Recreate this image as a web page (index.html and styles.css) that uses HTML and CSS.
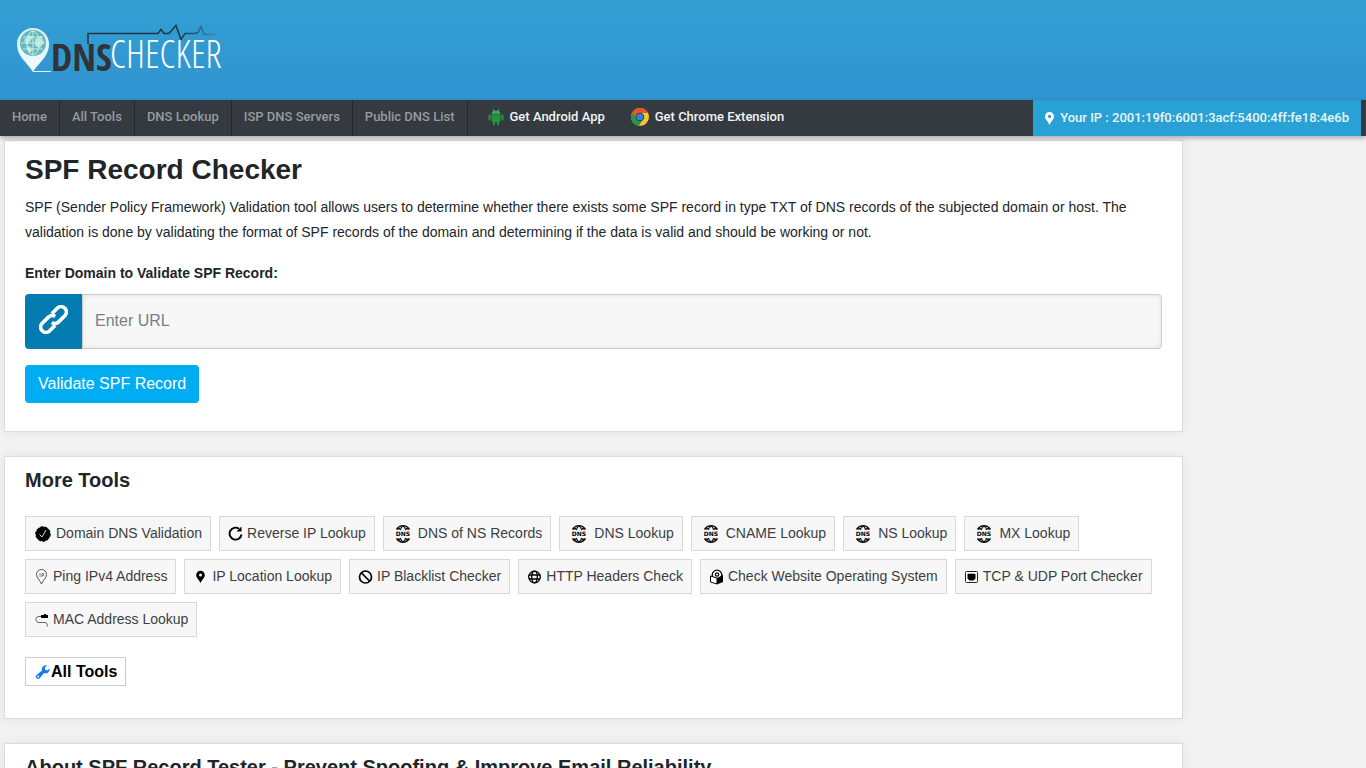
FILE: index.html
```html
<!DOCTYPE html>
<html lang="en">
<head>
<meta charset="utf-8">
<meta name="viewport" content="width=device-width, initial-scale=1">
<title>SPF Record Checker</title>
<link rel="stylesheet" href="styles.css">
</head>
<body>
<svg class="defs" aria-hidden="true">
  <symbol id="globe" viewBox="0 0 22 22">
    <g fill="none" stroke="#111" stroke-width="1.400">
      <path d="M4.500 6.500Q7 2.700 11 2.700T17.500 6.500M4.500 15.500Q7 19.300 11 19.300T17.500 15.500"/>
      <path d="M8.300 7Q9 4 11 3Q13 4 13.700 7M8.300 15Q9 18 11 19Q13 18 13.700 15" stroke-width="1.200"/>
      <path d="M5 5.800h3M14 5.800h3M5 16.200h3M14 16.200h3"/>
    </g>
  </symbol>
</svg>
<header class="header">
  <a class="logo" href="#" aria-label="DNS Checker">
    <svg width="210" height="56" viewBox="0 0 210 56">
      <defs>
        <linearGradient id="pin" x2="0" y2="1"><stop offset="0" stop-color="#d5eff5"/><stop offset="1" stop-color="#f4fcff"/></linearGradient>
        <linearGradient id="line"><stop offset="0" stop-color="#fff" stop-opacity=".4"/><stop offset="1" stop-color="#fff"/></linearGradient>
        <linearGradient id="pulse"><stop offset=".7" stop-color="#20363f"/><stop offset="1" stop-color="#20363f" stop-opacity=".1"/></linearGradient>
      </defs>
      <path d="M17 52C12 43 1 37 1 24a16 16 0 0 1 32 0c0 13-11 19-16 28Z" fill="url(#pin)"/>
      <circle cx="17" cy="23" r="13" fill="#63b9b8"/>
      <g fill="none" stroke="#e2f6f3" stroke-width=".8"><ellipse cx="17" cy="23" rx="6" ry="12"/><path d="M5 23h24M7 17h20M7 29h20M17 11v24"/></g>
      <path d="M8 20l5-5 4 2-3 5-4 2zM19 19l6-3 3 6-4 6-5-2zM10 26l5 1 1 4-3 2z" fill="#d5f1ed" opacity=".75"/>
      <path d="M17 51.500h18" stroke="#d9f3ff" stroke-width="1"/>
      <path d="M90 51.500h115" stroke="url(#line)" stroke-width="2"/>
      <path d="M72 24V13.500h70l3-4 3 4h5l7-8 5 14 4-6h9l4-1 3-6 3 8h14" fill="none" stroke="url(#pulse)" stroke-width="1.500"/>
      <text x="35" y="51" class="logo-bold">DNS</text>
      <text x="94" y="48" class="logo-light">CHECKER</text>
    </svg>
  </a>
</header>
<nav class="nav">
  <div class="links">
    <a class="item" href="#">Home</a><a class="item" href="#">All Tools</a><a class="item" href="#">DNS Lookup</a><a class="item" href="#">ISP DNS Servers</a><a class="item" href="#">Public DNS List</a>
  </div>
  <div class="apps">
    <a class="app" href="#"><svg width="16" height="18" viewBox="0 0 16 18"><path d="M3.500 6C3.500 1 12.500 1 12.500 6Z" fill="#359750"/><path d="M4.500 1l1.500 2M11.500 1L10 3" stroke="#359750"/><path d="M3.500 6.500h9V13q0 1-1 1h-7q-1 0-1-1Z" fill="#21963e"/><path d="M1.500 7.500v4M14.500 7.500v4M6 13.500v3M10 13.500v3" stroke="#21963e" stroke-width="2" stroke-linecap="round"/><path d="M5.500 4h1M9.500 4h1" stroke="#dceee0"/></svg>Get Android App</a>
    <a class="app" href="#"><svg width="18" height="18" viewBox="0 0 18 18"><circle cx="9" cy="9" r="9" fill="#fbc62f"/><path d="M9 9L1.200 4.500A9 9 0 0 0 8 18l4-7Z" fill="#299648"/><path d="M9 9 5.500 11 1.200 4.500A9 9 0 0 1 17 5H9Z" fill="#e9542c"/><circle cx="9" cy="9" r="4.300" fill="#273f51"/><circle cx="9" cy="9" r="3.300" fill="#2988de"/></svg>Get Chrome Extension</a>
  </div>
  <a class="ip" href="#"><svg width="9" height="13" viewBox="0 0 9 13"><path fill="#fff" fill-rule="evenodd" d="M4.500 0A4.400 4.400 0 0 0 0 4.500C0 7.500 3 9.500 4.500 13 6 9.500 9 7.500 9 4.500A4.400 4.400 0 0 0 4.500 0Zm0 2.800a1.600 1.600 0 1 1 0 3.200 1.600 1.600 0 0 1 0-3.200Z"/></svg>Your IP : 2001:19f0:6001:3acf:5400:4ff:fe18:4e6b</a>
</nav>
<main class="main">
  <section class="card">
    <h1 class="title">SPF Record Checker</h1>
    <p class="intro">SPF (Sender Policy Framework) Validation tool allows users to determine whether there exists some SPF record in type TXT of DNS records of the subjected domain or host. The validation is done by validating the format of SPF records of the domain and determining if the data is valid and should be working or not.</p>
    <form class="form">
      <label class="label" for="url">Enter Domain to Validate SPF Record:</label>
      <div class="group">
        <span class="addon"><svg width="29" height="29" viewBox="-15 -15 30 30"><g transform="rotate(-45)" fill="none" stroke="#fff" stroke-width="3.800"><path d="M3 -5.500H11a5.500 5.500 0 0 1 0 11H2a5.500 5.500 0 0 1-5.500-4.500"/><path d="M-3 5.500H-11a5.500 5.500 0 0 1 0-11H-2a5.500 5.500 0 0 1 5.500 4.500"/></g></svg></span>
        <input class="input" id="url" type="text" placeholder="Enter URL">
      </div>
      <button class="submit" type="button">Validate SPF Record</button>
    </form>
  </section>
  <section class="card tools-card">
    <h2 class="subtitle">More Tools</h2>
    <div class="tools">
      <a class="tool" href="#"><svg width="18" height="18" viewBox="0 0 18 18"><circle cx="9" cy="9" r="7.300" fill="#000" stroke="#000" stroke-dasharray="3 1.500"/><path d="M5.500 9.500L8 12l4-7" fill="none" stroke="#ddd"/></svg>Domain DNS Validation</a>
      <a class="tool" href="#"><svg width="15" height="16" viewBox="0 0 15 16"><path d="M11 2.700A6 6 0 1 0 13.500 8.500" fill="none" stroke="#000" stroke-width="1.900"/><path d="M8.500 5.500H13.500V.5Z"/></svg>Reverse IP Lookup</a>
      <a class="tool" href="#"><svg width="22" height="22"><use href="#globe"/><text x="11" y="13" class="dns-text">DNS</text></svg>DNS of NS Records</a>
      <a class="tool" href="#"><svg width="22" height="22"><use href="#globe"/><text x="11" y="13" class="dns-text">DNS</text></svg>DNS Lookup</a>
      <a class="tool" href="#"><svg width="22" height="22"><use href="#globe"/><text x="11" y="13" class="dns-text">DNS</text></svg>CNAME Lookup</a>
      <a class="tool" href="#"><svg width="22" height="22"><use href="#globe"/><text x="11" y="13" class="dns-text">DNS</text></svg>NS Lookup</a>
      <a class="tool" href="#"><svg width="22" height="22"><use href="#globe"/><text x="11" y="13" class="dns-text">DNS</text></svg>MX Lookup</a>
      <a class="tool" href="#"><svg width="15" height="16" viewBox="0 0 15 16"><path d="M7.500 15C6 11 2.500 9 2.500 5.500a5 5 0 0 1 10 0C12.500 9 9 11 7.500 15Z" fill="none" stroke="#555"/><path d="M6 4v4M8 8V4.500h1.500v2H8" fill="none" stroke="#666" stroke-width=".8"/></svg>Ping IPv4 Address</a>
      <a class="tool" href="#"><svg width="15" height="16" viewBox="0 0 15 16"><path fill-rule="evenodd" d="M7.500 14C6 10.500 3.200 9 3.200 6a4.300 4.300 0 0 1 8.600 0c0 3-2.800 4.500-4.300 8ZM7.500 4.500a1.500 1.500 0 1 0 0 3 1.500 1.500 0 0 0 0-3Z"/></svg>IP Location Lookup</a>
      <a class="tool" href="#"><svg width="15" height="16" viewBox="0 0 15 16"><circle cx="7.500" cy="8" r="6" fill="none" stroke="#000" stroke-width="1.700"/><path d="M3.500 4l8 8" stroke="#000" stroke-width="1.700"/></svg>IP Blacklist Checker</a>
      <a class="tool" href="#"><svg width="15" height="16" viewBox="0 0 15 16"><g fill="none" stroke="#000" stroke-width="1.300"><circle cx="7.500" cy="8" r="5.800"/><ellipse cx="7.500" cy="8" rx="2.800" ry="5.800"/><path d="M2 6h11M2 10h11"/></g></svg>HTTP Headers Check</a>
      <a class="tool" href="#"><svg width="15" height="16" viewBox="0 0 15 16"><circle cx="8" cy="6" r="4.800" fill="#fff" stroke="#000" stroke-width="1.300"/><circle cx="8" cy="5.500" r="1.700" fill="none" stroke="#000" stroke-width="1.200"/><path d="M1.500 7L8 9v6l-6.500-2Z" fill="#fff" stroke="#000"/><path d="M8 9l6-3v7l-6 2.500Z"/></svg>Check Website Operating System</a>
      <a class="tool" href="#"><svg width="15" height="16" viewBox="0 0 15 16"><rect x="1.500" y="2.500" width="12" height="11" rx="1" fill="#fff" stroke="#222"/><path d="M3.500 5h1V4.500h1V5h1V4.500h2V5h1V4.500h1V5h1V9.500l-2 2h-4l-2-2Z"/></svg>TCP &amp; UDP Port Checker</a>
      <a class="tool" href="#"><svg width="15" height="16" viewBox="0 0 15 16"><path d="M8 4.500H4a3.200 3.200 0 0 0 0 6h7q2.500 0 2.500 4" fill="none" stroke="#666"/><path d="M7 3h3V2h2v1h2v3H7Z"/></svg>MAC Address Lookup</a>
    </div>
    <a class="all" href="#"><svg width="16" height="16" viewBox="0 0 16 16"><path fill="#107cf1" fill-rule="evenodd" d="M14.500 4.500l-2.300 2-2-.7-.5-2L12 1.500A4 4 0 0 0 7 6.500L1.500 11a2.200 2.200 0 1 0 3.200 3.200L9 9a4 4 0 0 0 5.500-4.500ZM3.200 11.500a1 1 0 1 1 0 2 1 1 0 0 1 0-2Z"/></svg>All Tools</a>
  </section>
  <section class="card">
    <h2 class="subtitle">About SPF Record Tester - Prevent Spoofing &amp; Improve Email Reliability</h2>
  </section>
</main>
</body>
</html>
```
FILE: styles.css
```css
* { box-sizing: border-box; }
html { scrollbar-width: none; }
body {
  margin: 0;
  background: #f2f2f2;
  color: #212529;
  font: 14px/21px "Liberation Sans", Arial, sans-serif;
}
a { color: inherit; text-decoration: none; }
svg { flex: none; }
.defs { display: block; width: 0; height: 0; }
.dns-text { font: 900 6px "DejaVu Sans", sans-serif; text-anchor: middle; fill: #000; }

.header {
  height: 100px;
  padding: 20px 16px;
  background: linear-gradient(#329fd2, #3194d1);
}
.logo { display: inline-block; }
.logo svg { display: block; overflow: visible; }
.logo-bold { font: bold 38px "Open Sans Condensed", "Liberation Sans Narrow", sans-serif; fill: #303437; }
.logo-light { font: 300 38px "Open Sans Condensed Light", "Open Sans Condensed", sans-serif; fill: #fff; }

.nav {
  position: relative;
  display: flex;
  height: 36px;
  padding-right: 5px;
  background: #343a40;
  color: #f1f3f5;
  font-family: Roboto, "Liberation Sans", sans-serif;
  font-weight: 500;
  font-size: 13px;
  line-height: 34px;
  box-shadow: 0 2px 5px rgba(0, 0, 0, .3);
}
.links, .apps { display: flex; }
.item {
  padding: 0 12px;
  border-right: 1px solid #23272b;
  color: #979ba1;
}
.apps { gap: 26px; padding-left: 20px; }
.app { display: flex; align-items: center; gap: 6px; height: 34px; }
.ip {
  display: flex;
  align-items: center;
  gap: 6px;
  margin-left: auto;
  padding: 0 12px;
  background: #2aa1d4;
  color: #e8f6fc;
}

.main {
  display: flex;
  flex-direction: column;
  gap: 24px;
  margin: 4px 183px 0 4px;
}
.card {
  padding: 11px 20px 28px;
  background: #fff;
  border: 1px solid #dcdcdc;
  box-shadow: 0 0 10px rgba(0, 0, 0, .07);
}
.title { margin: 0 0 7px; font-size: 28px; line-height: 36px; }
.intro { margin: 0; line-height: 25px; }
.label { display: block; margin: 18px 0 11px; font-weight: bold; line-height: 20px; }
.group { display: flex; height: 55px; margin-bottom: 16px; }
.addon {
  display: flex;
  align-items: center;
  justify-content: center;
  width: 57px;
  padding-bottom: 4px;
  border-radius: 4px 0 0 4px;
  background: #047cb2;
}
.input {
  flex: 1;
  min-width: 0;
  padding: 0 12px 2px;
  border: 1px solid #ccc;
  border-radius: 0 4px 4px 0;
  background: #f7f7f7;
  box-shadow: inset 0 0 5px rgba(0, 0, 0, .1);
  font: inherit;
  font-size: 16px;
}
.input::placeholder { color: #777e86; opacity: 1; }
.submit {
  display: block;
  height: 38px;
  padding: 0 13px 2px;
  border: 0;
  border-radius: 4px;
  background: #00adf2;
  color: #fff;
  font: inherit;
  font-size: 16px;
}

.subtitle { margin: 0 0 23px; font-size: 20px; line-height: 25px; }
.tools-card { padding-bottom: 32px; }
.tools { display: flex; flex-wrap: wrap; gap: 8px; }
.tool {
  display: flex;
  align-items: center;
  gap: 4px;
  height: 35px;
  padding: 0 8px;
  border: 1px solid #d8d8d8;
  background: #f7f7f7;
  color: #3b3f42;
}
.all {
  display: inline-flex;
  align-items: center;
  height: 29px;
  margin-top: 20px;
  padding: 0 8px 0 9px;
  border: 1px solid #ccc;
  color: #000;
  font-size: 16px;
  font-weight: bold;
}
```
